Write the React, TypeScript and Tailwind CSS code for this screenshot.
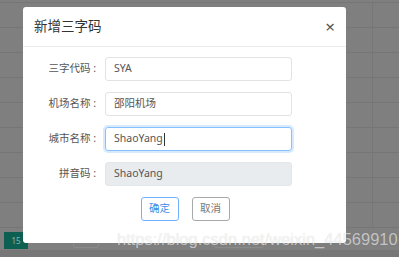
import React from "react";

const fields = [
  { label: "三字代码", value: "SYA", state: "normal" },
  { label: "机场名称", value: "邵阳机场", state: "normal" },
  { label: "城市名称", value: "ShaoYang", state: "focus" },
  { label: "拼音码", value: "ShaoYang", state: "disabled" },
];

const font = "font-['Noto_Sans','Noto_Sans_CJK_SC',sans-serif]";

const App = () => {
  const rows = Array.from({ length: 9 });

  return (
    <div className={`relative w-[399px] h-[257px] overflow-hidden bg-[#7f7f7f] ${font}`}>
      {/* table behind the backdrop */}
      <div className="flex flex-col">
        <div className="h-[3px] border-b border-[#767676]" />
        {rows.map((_, i) => (
          <div key={i} className="flex h-[25px] border-b border-[#767676]">
            <div className="w-[373px] border-r border-[#767676]" />
          </div>
        ))}
        <div className="flex h-[22px] items-center gap-[45px] pl-[4px] pt-[3px]">
          <div className="flex h-[17px] w-[24px] items-center justify-center bg-[#0d5f52] text-[8px] text-[#8fb5ad]">15</div>
          <div className="h-[15px] w-[26px] rounded-[2px] border border-[#8a8a8a]" />
          <div className="ml-[70px] h-[15px] w-[50px] rounded-[2px] border border-[#8a8a8a]" />
        </div>
        <div className="h-[10px] bg-[#777777]" />
      </div>

      {/* dialog */}
      <div className="absolute left-[23px] top-[7px] flex h-[236px] w-[323px] flex-col rounded-[3px] bg-white">
        <div className="flex h-[40px] items-center justify-between border-b border-[#ececec] pl-[11px] pr-[11px]">
          <span className="text-[13.5px] text-[#333]">新增三字码</span>
          <span className="text-[17px] leading-none text-[#555]">×</span>
        </div>

        <div className="flex flex-col gap-[11px] pt-[10px]">
          {fields.map((f) => (
            <div key={f.label} className="flex items-center">
              <label className="w-[74px] pr-[1px] text-right text-[10.5px] text-[#555] whitespace-pre">{f.label + " :"}</label>
              <div
                className={`ml-[8px] flex h-[24px] w-[187px] items-center rounded-[3px] border pl-[8px] text-[10.5px] text-[#555] ${
                  f.state === "focus"
                    ? "border-[#86c1ff] shadow-[0_0_0_2px_#d7eaff]"
                    : f.state === "disabled"
                    ? "border-[#e4e7ea] bg-[#e9ecef]"
                    : "border-[#e3e3e3]"
                }`}
              >
                {f.value}
                {f.state === "focus" && <span className="ml-[1px] h-[13px] w-px bg-[#333]" />}
              </div>
            </div>
          ))}
        </div>

        <div className="flex justify-center gap-[13px] pt-[11px] pl-[1px]">
          <button className="h-[24px] w-[38px] rounded-[3px] border border-[#6fb3ff] text-[10.5px] text-[#3a8ee6]">确定</button>
          <button className="h-[24px] w-[38px] rounded-[3px] border border-[#a8a8a8] text-[10.5px] text-[#777]">取消</button>
        </div>
      </div>

      {/* watermark */}
      <div className="absolute left-[117px] top-[227px] font-['Liberation_Sans',sans-serif] text-[16.5px] text-white/60 [text-shadow:0_0_1px_rgba(0,0,0,0.15)]">
        https://blog.csdn.net/weixin_44569910
      </div>
    </div>
  );
};

export default App;
